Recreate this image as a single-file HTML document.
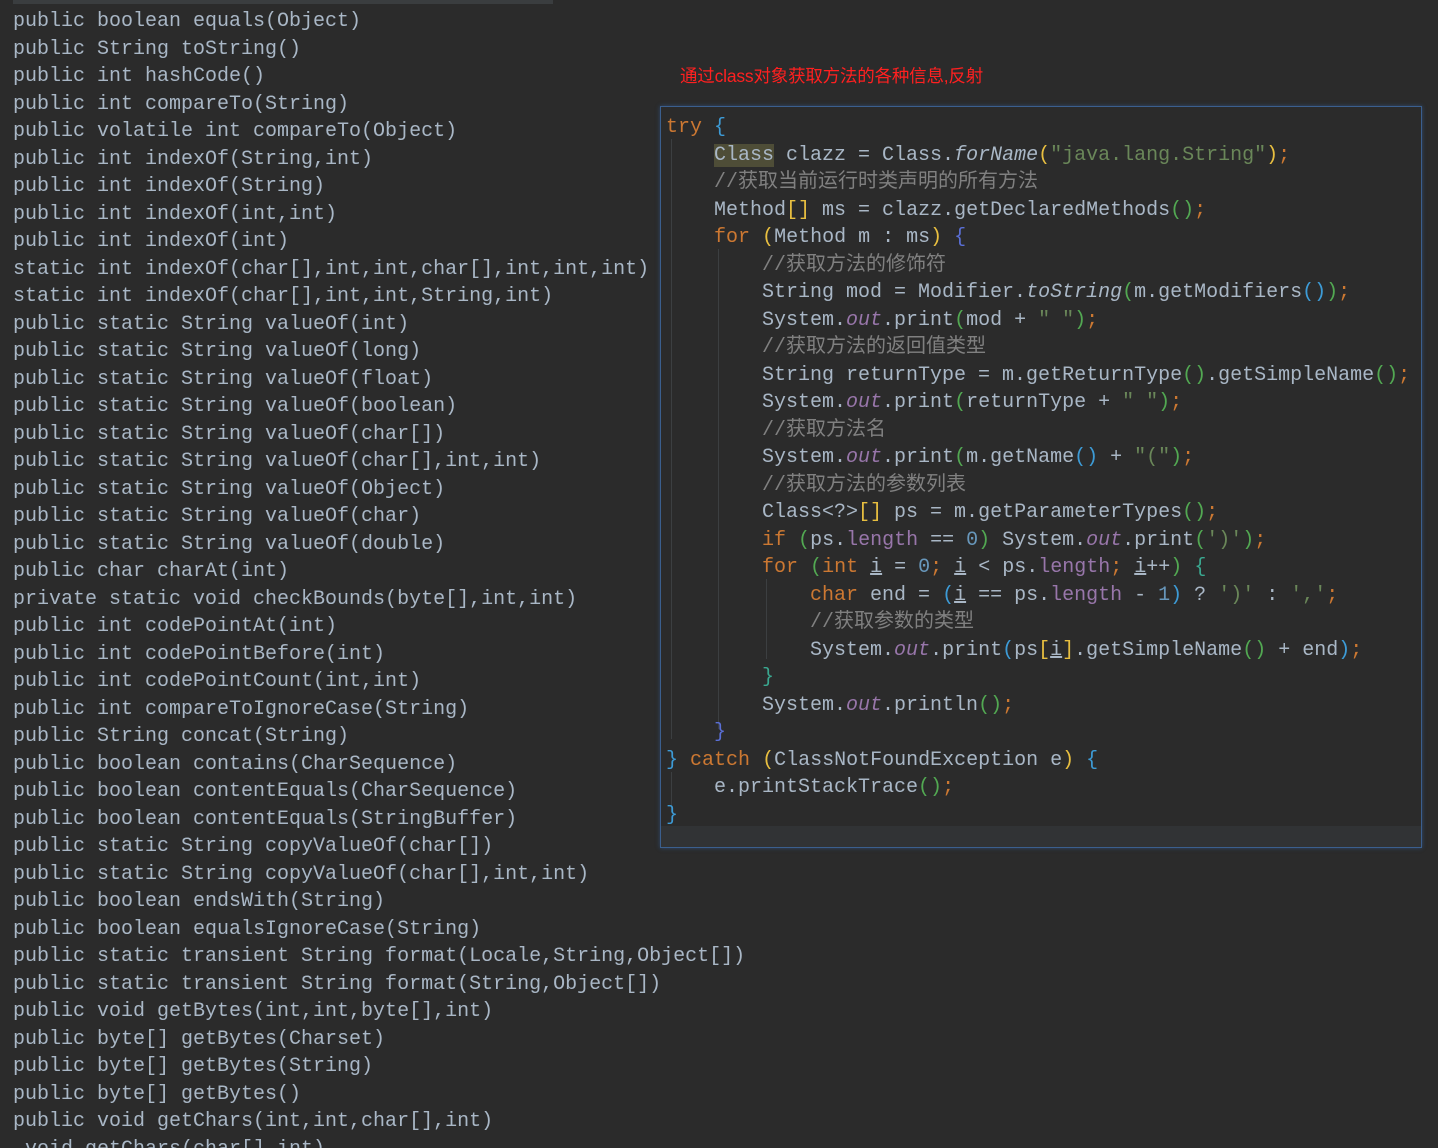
<!DOCTYPE html>
<html><head><meta charset="utf-8"><style>
html,body{margin:0;padding:0;background:#2b2b2b;width:1438px;height:1148px;overflow:hidden;position:relative}
.mono{font-family:"Liberation Mono","Noto Sans CJK SC",monospace;font-size:20px;line-height:27.5px;white-space:pre;color:#a9b7c6}
#left{position:absolute;left:13px;top:8px}
#strip{position:absolute;left:13px;top:0;width:540px;height:4px;background:#3a3d3f}
#cap{position:absolute;left:680px;top:63px;color:#ff2020;font-family:"Liberation Sans","Noto Sans CJK SC",sans-serif;font-size:17.5px;letter-spacing:-0.2px}
#panel{position:absolute;left:660px;top:106px;width:760px;height:740px;border:1px solid #3b5f8e;box-shadow:0 0 4px #2f4a70;background:#2b2b2b;overflow:hidden}
#code{position:absolute;left:5px;top:7px}
#foot{position:absolute;left:0;top:719px;width:760px;height:21px;background:#313335}
.k{color:#cc7832}.c{color:#808080}.s{color:#6a8759}.n{color:#6897bb}.f{color:#9876aa;font-style:italic}.i{font-style:italic}
.y{color:#e8bf40}.b{color:#3d9bd6}.g{color:#52a852}.p{color:#5a6fd6}.t{color:#3aa890}
.u{text-decoration:underline}
.hl{background:#4e4d37}
.guide{position:absolute;width:1px;background:#3c3f41}
</style></head><body>
<div id="strip"></div>
<div id="left" class="mono">public boolean equals(Object)
public String toString()
public int hashCode()
public int compareTo(String)
public volatile int compareTo(Object)
public int indexOf(String,int)
public int indexOf(String)
public int indexOf(int,int)
public int indexOf(int)
static int indexOf(char[],int,int,char[],int,int,int)
static int indexOf(char[],int,int,String,int)
public static String valueOf(int)
public static String valueOf(long)
public static String valueOf(float)
public static String valueOf(boolean)
public static String valueOf(char[])
public static String valueOf(char[],int,int)
public static String valueOf(Object)
public static String valueOf(char)
public static String valueOf(double)
public char charAt(int)
private static void checkBounds(byte[],int,int)
public int codePointAt(int)
public int codePointBefore(int)
public int codePointCount(int,int)
public int compareToIgnoreCase(String)
public String concat(String)
public boolean contains(CharSequence)
public boolean contentEquals(CharSequence)
public boolean contentEquals(StringBuffer)
public static String copyValueOf(char[])
public static String copyValueOf(char[],int,int)
public boolean endsWith(String)
public boolean equalsIgnoreCase(String)
public static transient String format(Locale,String,Object[])
public static transient String format(String,Object[])
public void getBytes(int,int,byte[],int)
public byte[] getBytes(Charset)
public byte[] getBytes(String)
public byte[] getBytes()
public void getChars(int,int,char[],int)
 void getChars(char[],int)</div>
<div id="cap">通过class对象获取方法的各种信息,反射</div>
<div id="panel">
<div id="foot"></div>
<div class="guide" style="left:10px;top:32px;height:600px"></div>
<div class="guide" style="left:57px;top:142px;height:480px"></div>
<div class="guide" style="left:105px;top:472px;height:80px"></div>
<div class="guide" style="left:10px;top:665px;height:40px"></div>
<div id="code" class="mono"><span class="k">try</span> <span class="b">{</span>
    <span class="hl">Class</span> clazz = Class.<span class="i">forName</span><span class="y">(</span><span class="s">"java.lang.String"</span><span class="y">)</span><span class="k">;</span>
    <span class="c">//获取当前运行时类声明的所有方法</span>
    Method<span class="y">[]</span> ms = clazz.getDeclaredMethods<span class="g">()</span><span class="k">;</span>
    <span class="k">for</span> <span class="y">(</span>Method m : ms<span class="y">)</span> <span class="p">{</span>
        <span class="c">//获取方法的修饰符</span>
        String mod = Modifier.<span class="i">toString</span><span class="g">(</span>m.getModifiers<span class="b">()</span><span class="g">)</span><span class="k">;</span>
        System.<span class="f">out</span>.print<span class="g">(</span>mod + <span class="s">" "</span><span class="g">)</span><span class="k">;</span>
        <span class="c">//获取方法的返回值类型</span>
        String returnType = m.getReturnType<span class="g">()</span>.getSimpleName<span class="g">()</span><span class="k">;</span>
        System.<span class="f">out</span>.print<span class="g">(</span>returnType + <span class="s">" "</span><span class="g">)</span><span class="k">;</span>
        <span class="c">//获取方法名</span>
        System.<span class="f">out</span>.print<span class="g">(</span>m.getName<span class="b">()</span> + <span class="s">"("</span><span class="g">)</span><span class="k">;</span>
        <span class="c">//获取方法的参数列表</span>
        Class&lt;?&gt;<span class="y">[]</span> ps = m.getParameterTypes<span class="g">()</span><span class="k">;</span>
        <span class="k">if</span> <span class="g">(</span>ps.<span class="f" style="font-style:normal">length</span> == <span class="n">0</span><span class="g">)</span> System.<span class="f">out</span>.print<span class="g">(</span><span class="s">')'</span><span class="g">)</span><span class="k">;</span>
        <span class="k">for</span> <span class="g">(</span><span class="k">int</span> <span class="u">i</span> = <span class="n">0</span><span class="k">;</span> <span class="u">i</span> &lt; ps.<span class="f" style="font-style:normal">length</span><span class="k">;</span> <span class="u">i</span>++<span class="g">)</span> <span class="t">{</span>
            <span class="k">char</span> end = <span class="b">(</span><span class="u">i</span> == ps.<span class="f" style="font-style:normal">length</span> - <span class="n">1</span><span class="b">)</span> ? <span class="s">')'</span> : <span class="s">','</span><span class="k">;</span>
            <span class="c">//获取参数的类型</span>
            System.<span class="f">out</span>.print<span class="b">(</span>ps<span class="y">[</span><span class="u">i</span><span class="y">]</span>.getSimpleName<span class="g">()</span> + end<span class="b">)</span><span class="k">;</span>
        <span class="t">}</span>
        System.<span class="f">out</span>.println<span class="g">()</span><span class="k">;</span>
    <span class="p">}</span>
<span class="b">}</span> <span class="k">catch</span> <span class="y">(</span>ClassNotFoundException e<span class="y">)</span> <span class="b">{</span>
    e.printStackTrace<span class="g">()</span><span class="k">;</span>
<span class="b">}</span></div>
</div>
</body></html>
